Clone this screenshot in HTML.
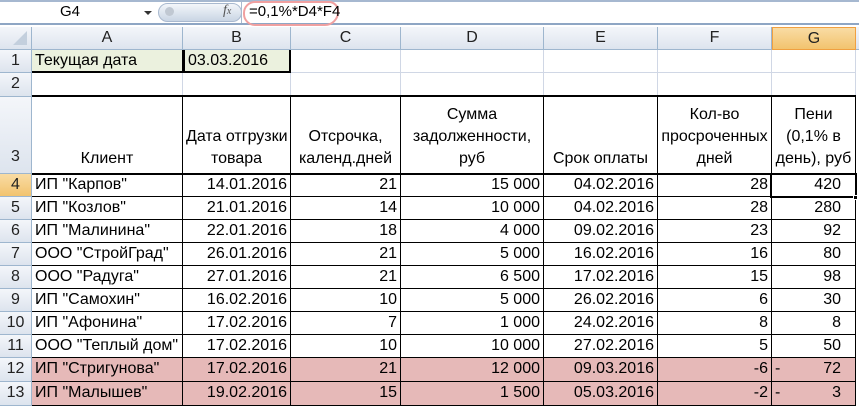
<!DOCTYPE html>
<html><head><meta charset="utf-8">
<style>
*{margin:0;padding:0;box-sizing:border-box}
body{width:859px;height:406px;overflow:hidden;background:#fff;font-family:"Liberation Sans",sans-serif;font-size:16px;color:#000;position:relative}
.a{position:absolute}
.c{position:absolute;border-right:1px solid #000;border-bottom:1px solid #000;padding:0 3px;white-space:nowrap;overflow:hidden;line-height:22px}
.g{position:absolute;border-right:1px solid #d0d7e5;border-bottom:1px solid #d0d7e5}
.h{position:absolute;background:linear-gradient(#f4f6fa,#dde4ee);border-right:1px solid #9eb6ce;border-bottom:1px solid #9eb6ce;text-align:center;color:#222;font-size:16px;line-height:22px}
.r{text-align:right}
.p{background:#e6b9b8}
.t{text-align:center;line-height:22px}
</style></head><body>
<!-- formula bar -->
<div class="a" style="left:0;top:0;width:859px;height:25px;background:#fff;border-bottom:2px solid #8ea6c4"></div>
<div class="a" style="left:0;top:0;width:859px;height:2px;background:#a6b8d0"></div>
<div class="a" style="left:60px;top:3px;font-size:15px">G4</div>
<div class="a" style="left:144px;top:11px;width:0;height:0;border-left:4px solid transparent;border-right:4px solid transparent;border-top:4px solid #333"></div>
<div class="a" style="left:158px;top:3px;width:84px;height:19px;border-radius:10px;background:linear-gradient(#f3f6fa,#c9d5e4);border:1px solid #a9b9cf"></div>
<div class="a" style="left:165px;top:7px;width:9px;height:9px;border-radius:50%;background:#c0c8d2"></div>
<div class="a" style="left:223px;top:3px;font-family:'Liberation Serif',serif;font-style:italic;font-size:14px;color:#555">f<span style="font-size:10px">x</span></div>
<div class="a" style="left:241px;top:2px;width:1px;height:21px;background:#a9b9cf"></div>
<div class="a" style="left:243px;top:1px;width:96px;height:25px;border:2px solid #f0a0a0;border-radius:12px 10px 14px 12px"></div>
<div class="a" style="left:249px;top:3px;font-size:15px">=0,1%*D4*F4</div>
<!-- column headers -->
<div class="a" style="left:0;top:27px;width:859px;height:23px;background:#dfe6ef"></div>
<div class="h" style="left:0;top:27px;width:32px;height:23px"><div style="position:absolute;right:4px;bottom:4px;width:0;height:0;border-left:14px solid transparent;border-bottom:14px solid #c3cfdd"></div></div>
<div class="h" style="left:32px;top:27px;width:151px;height:23px">A</div>
<div class="h" style="left:183px;top:27px;width:108px;height:23px">B</div>
<div class="h" style="left:291px;top:27px;width:110px;height:23px">C</div>
<div class="h" style="left:401px;top:27px;width:143px;height:23px">D</div>
<div class="h" style="left:544px;top:27px;width:114px;height:23px">E</div>
<div class="h" style="left:658px;top:27px;width:114px;height:23px">F</div>
<div class="h" style="left:772px;top:27px;width:84px;height:23px;background:linear-gradient(#f9dca4,#f2c36e);border:1px solid #f0a040">G</div>
<div class="h" style="left:856px;top:27px;width:10px;height:23px"></div>
<!-- row headers -->
<div class="h" style="left:0;top:50px;width:32px;height:23px">1</div>
<div class="h" style="left:0;top:73px;width:32px;height:24px">2</div>
<div class="h" style="left:0;top:97px;width:32px;height:77px;line-height:120px">3</div>
<div class="h" style="left:0;top:174px;width:32px;height:23px;background:linear-gradient(#f9dca4,#f2c36e)">4</div>
<div class="h" style="left:0;top:197px;width:32px;height:23px">5</div>
<div class="h" style="left:0;top:220px;width:32px;height:23px">6</div>
<div class="h" style="left:0;top:243px;width:32px;height:23px">7</div>
<div class="h" style="left:0;top:266px;width:32px;height:23px">8</div>
<div class="h" style="left:0;top:289px;width:32px;height:23px">9</div>
<div class="h" style="left:0;top:312px;width:32px;height:23px">10</div>
<div class="h" style="left:0;top:335px;width:32px;height:23px">11</div>
<div class="h" style="left:0;top:358px;width:32px;height:24px">12</div>
<div class="h" style="left:0;top:382px;width:32px;height:24px">13</div>
<!-- rows 1-2 grid -->
<div class="g" style="left:291px;top:50px;width:110px;height:23px"></div>
<div class="g" style="left:401px;top:50px;width:143px;height:23px"></div>
<div class="g" style="left:544px;top:50px;width:114px;height:23px"></div>
<div class="g" style="left:658px;top:50px;width:114px;height:23px"></div>
<div class="g" style="left:772px;top:50px;width:84px;height:23px"></div>
<div class="g" style="left:32px;top:73px;width:151px;height:24px"></div>
<div class="g" style="left:183px;top:73px;width:108px;height:24px"></div>
<div class="g" style="left:291px;top:73px;width:110px;height:24px"></div>
<div class="g" style="left:401px;top:73px;width:143px;height:24px"></div>
<div class="g" style="left:544px;top:73px;width:114px;height:24px"></div>
<div class="g" style="left:658px;top:73px;width:114px;height:24px"></div>
<div class="g" style="left:772px;top:73px;width:84px;height:24px"></div>
<div class="c" style="left:32px;top:50px;width:151px;height:23px;background:#ebf1de;border-bottom:2px solid #000">Текущая дата</div>
<div class="c" style="left:183px;top:50px;width:108px;height:23px;background:#ebf1de;border:2px solid #000;border-top:none">03.03.2016</div>
<!-- header row 3 -->
<div class="a" style="left:32px;top:95px;width:824px;height:2px;background:#000"></div>
<div class="c t" style="left:32px;top:97px;width:151px;height:77px;padding-top:51px">Клиент</div>
<div class="c t" style="left:183px;top:97px;width:108px;height:77px;padding-top:29px">Дата отгрузки<br>товара</div>
<div class="c t" style="left:291px;top:97px;width:110px;height:77px;padding-top:29px">Отсрочка,<br>календ.дней</div>
<div class="c t" style="left:401px;top:97px;width:143px;height:77px;padding-top:7px">Сумма<br>задолженности,<br>руб</div>
<div class="c t" style="left:544px;top:97px;width:114px;height:77px;padding-top:51px">Срок оплаты</div>
<div class="c t" style="left:658px;top:97px;width:114px;height:77px;padding-top:7px">Кол-во<br>просроченных<br>дней</div>
<div class="c t" style="left:772px;top:97px;width:84px;height:77px;padding-top:7px">Пени<br>(0,1% в<br>день), руб</div>
<div class="a" style="left:32px;top:173px;width:824px;height:2px;background:#000"></div>
<!-- data rows -->
<div id="d"></div>
<script>
var rows=[
["ИП \"Карпов\"","14.01.2016","21","15 000","04.02.2016","28","420",174,23,0],
["ИП \"Козлов\"","21.01.2016","14","10 000","04.02.2016","28","280",197,23,0],
["ИП \"Малинина\"","22.01.2016","18","4 000","09.02.2016","23","92",220,23,0],
["ООО \"СтройГрад\"","26.01.2016","21","5 000","16.02.2016","16","80",243,23,0],
["ООО \"Радуга\"","27.01.2016","21","6 500","17.02.2016","15","98",266,23,0],
["ИП \"Самохин\"","16.02.2016","10","5 000","26.02.2016","6","30",289,23,0],
["ИП \"Афонина\"","17.02.2016","7","1 000","24.02.2016","8","8",312,23,0],
["ООО \"Теплый дом\"","17.02.2016","10","10 000","27.02.2016","5","50",335,23,0],
["ИП \"Стригунова\"","17.02.2016","21","12 000","09.03.2016","-6","72",358,24,1],
["ИП \"Малышев\"","19.02.2016","15","1 500","05.03.2016","-2","3",382,24,1]];
var xs=[32,183,291,401,544,658,772,856],h="";
rows.forEach(function(r){
 for(var i=0;i<7;i++){
  var w=xs[i+1]-xs[i],cls="c"+(i>0?" r":"")+(r[9]?" p":""),st="";
  var t=r[i];
  if(i==6){st="padding-right:14px;";if(r[9])t='<span style="float:left">-</span>'+t;}
  h+='<div class="'+cls+'" style="left:'+xs[i]+'px;top:'+r[7]+'px;width:'+w+'px;height:'+r[8]+'px;'+st+'">'+t+'</div>';
 }
});
h+='<div class="a" style="left:770px;top:173px;width:87px;height:25px;border:2px solid #000"></div>';
h+='<div class="a" style="left:853px;top:195px;width:5px;height:5px;background:#000;border:1px solid #fff"></div>';
document.getElementById("d").outerHTML=h;
</script>
</body></html>
